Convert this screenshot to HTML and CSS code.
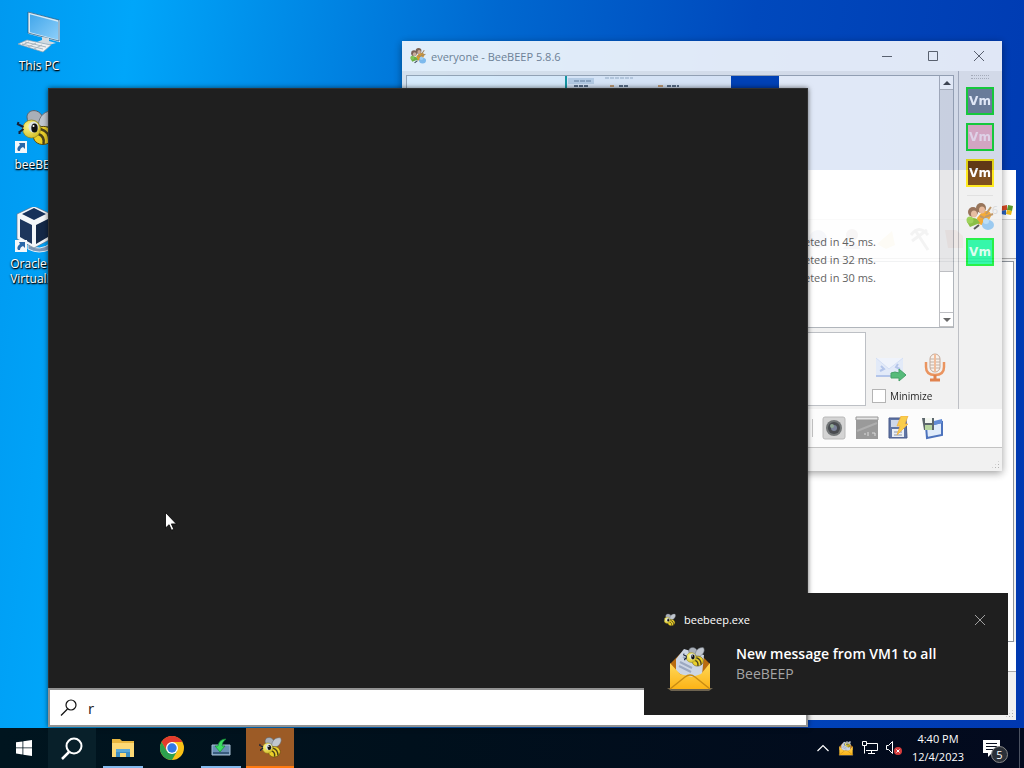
FILE: index.html
```html
<!DOCTYPE html>
<html lang="en">
<head>
    <meta charset="utf-8">
    <title>Desktop</title>
    <link rel="stylesheet" href="styles.css">
</head>
<body>
    <svg class="defs" width="0" height="0" aria-hidden="true">
        <defs>
            <linearGradient id="screenFill" x1="0" y1="0" x2="1" y2="1">
                <stop offset="0" stop-color="#3fa5ea"/>
                <stop offset="1" stop-color="#8fd0fa"/>
            </linearGradient>
            <linearGradient id="mailFill" x1="0" y1="0" x2="0" y2="1">
                <stop offset="0" stop-color="#ffd95a"/>
                <stop offset="1" stop-color="#fcb316"/>
            </linearGradient>
            <radialGradient id="beeFace" cx=".35" cy=".35" r=".8">
                <stop offset="0" stop-color="#fdf78a"/>
                <stop offset="1" stop-color="#cdb51b"/>
            </radialGradient>
        </defs>
        <symbol id="bee" viewBox="0 0 40 40">
            <path d="M13 16C7 7 13 1 20 3c6 2 8 9 6 15z" fill="#a9afb8" stroke="#59616b"/>
            <path d="M22 17c0-9 7-15 15-14 4 4 0 14-9 17z" fill="#c0c6ce" stroke="#6d747d"/>
            <path d="M21 20c8-4 15 0 16 7 0 7-8 11-14 9-6-2-9-8-2-16z" fill="#ebd02b" stroke="#5b4a0a"/>
            <path d="M24 21c7 2 9 6 9 13M22 26c5 2 6 5 5 10" fill="none" stroke="#4a421b" stroke-width="2.500"/>
            <circle cx="15" cy="21" r="9" fill="url(#beeFace)" stroke="#8b831b" stroke-width=".7"/>
            <ellipse cx="17" cy="19" rx="5" ry="5.500" fill="#dbe4e6"/>
            <ellipse cx="18" cy="20" rx="3.200" ry="4.500" fill="#111"/>
            <circle cx="17" cy="18" r="1" fill="#fff"/>
            <path d="M7 19l-6-3M7 21l-4 3M2 14l-1 3M3 23v3" stroke="#16213a" stroke-width="2" fill="none"/>
        </symbol>
        <symbol id="envelope" viewBox="0 0 48 48">
            <path d="M1 44h46l-4 3H5z" fill="#6d6350"/>
            <path d="M4 20L16 8h16l12 12v10H4z" fill="#b86c10"/>
            <path d="M10 15l8-10 20 6-2 20-12 6-14-10z" fill="#cdd6e4"/>
            <path d="M14 18l12 6M13 22l12 6M17 13l9 5" stroke="#9ba8c0" stroke-width="2"/>
            <use href="#bee" x="17" y="2" width="22" height="22"/>
            <path d="M4 19l10 11 12 3 9-3 9-11v26H4z" fill="url(#mailFill)"/>
            <path d="M4 45l15-12q5-4 10 0l15 12" fill="none" stroke="#c98c13" stroke-width="1.500"/>
        </symbol>
        <symbol id="people" viewBox="0 0 28 28">
            <path d="M11 15l5-6q9-3 9 4l-5 10-8-2z" fill="#f3a01c"/>
            <circle cx="7" cy="9" r="5" fill="#8b6046"/>
            <ellipse cx="8" cy="11" rx="3" ry="3.500" fill="#e4b595"/>
            <circle cx="15" cy="5" r="5" fill="#8a6244"/>
            <ellipse cx="16" cy="7" rx="3" ry="3.500" fill="#e5b08c"/>
            <path d="M20 11l5-7M19 14l8-3M14 13l6 3" stroke="#b98b56" stroke-width="2"/>
            <path d="M1 19q4-6 10-3l3 4-10 4z" fill="#7cb82f"/>
            <circle cx="4" cy="17" r="3.500" fill="#93cf47"/>
            <ellipse cx="22" cy="22" rx="6" ry="5" fill="#8fc4ef"/>
            <circle cx="20" cy="18" r="3" fill="#b3daf7"/>
            <path d="M8 26l5-4" stroke="#444" stroke-width="2"/>
        </symbol>
        <symbol id="shortcut" viewBox="0 0 12 12">
            <path d="M0 0h12v12H0z" fill="#f4f7fa"/>
            <path d="M4 2h6v6L8 6Q5 7 5 10H3Q1 7 5 4z" fill="#2a67a8"/>
        </symbol>
    </svg>

    <main class="desktop">
        <div class="shortcuts">
            <a class="shortcut" href="#">
                <svg width="48" height="46" viewBox="0 0 48 46">
                    <path d="M14 4l30 8v20l-30-8z" fill="url(#screenFill)" stroke="#d9ecf7" stroke-width="2"/>
                    <path d="M13 3l31 8v21l-31-8z" fill="none" stroke="#1a527b" stroke-width=".7"/>
                    <path d="M27 28l7 1v3l7 2-7 2-12-3 5-2z" fill="#d1dbe2"/>
                    <path d="M3 35l9-4 24 5-8 7z" fill="#eef1f3" stroke="#8fa2af" stroke-width=".7"/>
                    <path d="M7 35l21 5M10 33l21 5M14 33l-7 3M21 34l-8 4M27 36l-8 4" stroke="#a9b6bf"/>
                </svg>
                <span>This PC</span>
            </a>
            <a class="shortcut" href="#">
                <svg width="48" height="46" viewBox="0 0 48 46">
                    <use href="#bee" x="0" y="0" width="43" height="40"/>
                    <use href="#shortcut" x="0" y="33" width="12" height="12"/>
                </svg>
                <span>beeBEEP</span>
            </a>
            <a class="shortcut" href="#">
                <svg width="48" height="46" viewBox="0 0 48 46">
                    <path d="M13 38q12 7 23-2v6q-12 6-23 0z" fill="#7b96b6" stroke="#e4edf5"/>
                    <path d="M19 -1l17 8v25l-17 9L2 32V7z" fill="#f3f6f9" stroke="#58718d" stroke-width=".7"/>
                    <path d="M19 1l12 6-12 6-12-6z" fill="#17315a"/>
                    <path d="M5 12l12 6v19L5 30z" fill="#1d355c"/>
                    <path d="M21 18l12-6v18l-12 7z" fill="#142847"/>
                    <use href="#shortcut" x="0" y="33" width="12" height="12"/>
                </svg>
                <span>Oracle VM VirtualBox</span>
            </a>
        </div>

        <section class="window window-back">
            <div class="back-title"></div>
            <div class="back-menu">
                <span>6</span>
                <svg width="12" height="12" viewBox="0 0 12 12">
                    <path d="M1 2l5-1v5L0 7z" fill="#d84a24"/>
                    <path d="M7 1l5 1-1 5-5-1z" fill="#5b9b2c"/>
                    <path d="M0 7l5-1v5l-5-1z" fill="#2b62bd"/>
                    <path d="M6 6l5 1-1 4-5-1z" fill="#edbc19"/>
                </svg>
            </div>
            <div class="back-tools">
                <svg width="24" height="24" viewBox="0 0 24 24"><circle cx="12" cy="12" r="9" fill="#b1bdd5"/></svg>
                <svg width="24" height="24" viewBox="0 0 24 24"><circle cx="12" cy="8" r="6" fill="#baa"/><path d="M3 22q9-14 18 0z" fill="#bbc"/></svg>
                <svg width="24" height="24" viewBox="0 0 24 24"><path d="M3 17L18 4l3 14-9 4z" fill="#eadcab"/></svg>
                <svg width="24" height="24" viewBox="0 0 24 24"><path d="M3 8q8-11 17 0M7 3l13 20M19 3L4 14" fill="none" stroke="#999" stroke-width="3"/></svg>
                <svg width="24" height="24" viewBox="0 0 24 24"><path d="M3 3h11l7 6v12H6z" fill="#dcab98"/></svg>
            </div>
            <div class="back-body"></div>
            <div class="back-gap"></div>
            <div class="back-status"><div class="sizegrip"></div></div>
        </section>

        <section class="window window-chat">
            <header class="chat-title">
                <svg width="16" height="16"><use href="#people"/></svg>
                <h1>everyone - BeeBEEP 5.8.6</h1>
                <button type="button" aria-label="Minimize window"><svg width="12" height="12"><path d="M1 6.500h10"/></svg></button>
                <button type="button" aria-label="Maximize window"><svg width="12" height="12"><path d="M1.500 1.500h9v9h-9z"/></svg></button>
                <button type="button" aria-label="Close window"><svg width="12" height="12"><path d="M1 1l10 10M11 1L1 11"/></svg></button>
            </header>
            <div class="chat-client">
                <div class="chat-main">
                    <div class="chat-log">
                        <div class="log-text">
                            <div class="preview">
                                <div class="preview-left"></div>
                                <div class="preview-mid">
                                    <svg width="160" height="12" viewBox="0 0 160 12">
                                        <path d="M1 2h26v6H1z" fill="#ccdae8"/>
                                        <path d="M7 5h18" stroke="#6f7f93" stroke-dasharray="5 1"/>
                                        <path d="M38 2h28" stroke="#a4b3c3" stroke-dasharray="4 1"/>
                                        <path d="M7 10h14M52 10h9M100 10h12" stroke="#65707f" stroke-width="2" stroke-dasharray="4 1"/>
                                        <path d="M43 10h4M91 10h5" stroke="#d6a36b" stroke-width="2"/>
                                    </svg>
                                </div>
                                <div class="preview-right"></div>
                            </div>
                            <ul class="transfers">
                                <li>completed in 45 ms.</li>
                                <li>completed in 32 ms.</li>
                                <li>completed in 30 ms.</li>
                            </ul>
                        </div>
                        <div class="scrollbar">
                            <span class="scroll-arrow"><svg width="8" height="4"><path d="M0 4l4-4 4 4z" fill="#444"/></svg></span>
                            <span class="scroll-thumb"></span>
                            <span class="scroll-arrow"><svg width="8" height="4"><path d="M0 0l4 4 4-4z" fill="#555"/></svg></span>
                        </div>
                    </div>
                    <form class="composer">
                        <textarea aria-label="Message"></textarea>
                        <div class="composer-side">
                            <div class="composer-buttons">
                                <button type="button" aria-label="Send">
                                    <svg width="32" height="32" viewBox="0 0 32 32">
                                        <path d="M1 6h27v18H1z" fill="#dfe7f8"/>
                                        <path d="M1 6l13 11L28 6" fill="#edf2fb" stroke="#cfdbf3"/>
                                        <path d="M1 24h15M6 14l3 3-4 2M23 12l-2 3 4 2" fill="none" stroke="#a9bde8" stroke-width="2"/>
                                        <path d="M16 21q4-2 8 0v-4l7 6-7 6v-3h-8z" fill="#3fb268" stroke="#2d9554"/>
                                    </svg>
                                </button>
                                <button type="button" aria-label="Record">
                                    <svg width="32" height="32" viewBox="0 0 32 32">
                                        <rect x="11" y="2" width="10" height="18" rx="5" fill="#f7efe9" stroke="#bd9c88"/>
                                        <path d="M11 7h10M11 10h10M11 13h10M11 16h10" stroke="#b9a598"/>
                                        <path d="M16 2v18" stroke="#f0b48e" stroke-width="2"/>
                                        <path d="M7 10v5q0 8 9 8t9-8v-5" fill="none" stroke="#e8864a" stroke-width="2.500"/>
                                        <path d="M16 23v5M11 28h10" stroke="#dc7136" stroke-width="3"/>
                                    </svg>
                                </button>
                            </div>
                            <label class="minimize"><input type="checkbox">Minimize</label>
                        </div>
                    </form>
                </div>
                <aside class="users">
                    <div class="grip"></div>
                    <button type="button" class="user user-slate">Vm</button>
                    <button type="button" class="user user-pink">Vm</button>
                    <button type="button" class="user user-brown">Vm</button>
                    <div class="divider"></div>
                    <button type="button" class="group" aria-label="Everyone"><svg width="28" height="28"><use href="#people"/></svg></button>
                    <button type="button" class="user user-mint">Vm</button>
                </aside>
            </div>
            <div class="chat-tools">
                <div class="tools-divider"></div>
                <button type="button" aria-label="Camera">
                    <svg width="24" height="24" viewBox="0 0 24 24">
                        <rect x="1" y="1" width="22" height="22" rx="2" fill="#cfcfcf" stroke="#b0b0b0"/>
                        <circle cx="12" cy="12" r="8" fill="#5f6365"/>
                        <circle cx="12" cy="12" r="6" fill="#303338"/>
                        <circle cx="12" cy="12" r="3" fill="#68718b"/>
                        <circle cx="10" cy="10" r="2" fill="#809b87"/>
                    </svg>
                </button>
                <button type="button" aria-label="Screenshot">
                    <svg width="24" height="24" viewBox="0 0 24 24">
                        <path d="M1 1h22v22H1z" fill="#8c8c8c"/>
                        <path d="M1 1h22v3H1z" fill="#e2e2e2" stroke="#8a8a8a"/>
                        <path d="M2 15L22 7" stroke="#a4a4a4" stroke-width="2"/>
                        <path d="M9 18h2M13 16v4M17 17h3v3" fill="none" stroke="#d5d5d5"/>
                    </svg>
                </button>
                <button type="button" aria-label="Save draft">
                    <svg width="24" height="24" viewBox="0 0 24 24">
                        <path d="M1 2h17l1 20H1z" fill="#4a6399" stroke="#31457a"/>
                        <path d="M3 4h12v7H3z" fill="#c8d3e6"/>
                        <path d="M4 13h12v8H4z" fill="#e9edf4"/>
                        <path d="M6 16h8M6 19h8" stroke="#7f8898"/>
                        <path d="M13 0h7l-3 8h3L9 19l3-9H9z" fill="#f9c633" stroke="#efa425" stroke-width=".7"/>
                    </svg>
                </button>
                <button type="button" aria-label="Save chat">
                    <svg width="24" height="24" viewBox="0 0 24 24">
                        <path d="M5 10l16-4v13L6 22z" fill="#dceafb" stroke="#3560b4" stroke-width="2"/>
                        <path d="M13 5l8-2v4l-8 2z" fill="#4d7cd0"/>
                        <path d="M1 2h12v12H3z" fill="#475258"/>
                        <path d="M4 2h7v5H4z" fill="#f1f5ee"/>
                        <path d="M4 9h7v5H4z" fill="#afd193"/>
                    </svg>
                </button>
            </div>
            <footer class="chat-status"><div class="sizegrip"></div></footer>
        </section>

        <section class="search-panel">
            <div class="search-results"></div>
            <label class="search-box">
                <svg width="18" height="18" viewBox="0 0 18 18"><circle cx="11" cy="6" r="5"/><path d="M7.500 10L1 16.500"/></svg>
                <input type="text" value="r" aria-label="Search">
            </label>
        </section>

        <section class="toast">
            <div class="toast-head">
                <svg width="14" height="14"><use href="#bee"/></svg>
                <span>beebeep.exe</span>
                <button type="button" aria-label="Dismiss"><svg width="12" height="12"><path d="M1 1l10 10M11 1L1 11"/></svg></button>
            </div>
            <div class="toast-body">
                <svg width="48" height="48"><use href="#envelope"/></svg>
                <div>
                    <h2>New message from VM1 to all</h2>
                    <p>BeeBEEP</p>
                </div>
            </div>
        </section>

        <svg class="pointer" width="12" height="19" viewBox="0 0 12 19"><path d="M.5.5v15.500l3.600-3.300 2.400 5.600 2.300-1-2.400-5.400h5z" fill="#fff" stroke="#000" stroke-width=".8"/></svg>
    </main>

    <nav class="taskbar">
        <button type="button" class="task" aria-label="Start">
            <svg width="16" height="16" viewBox="0 0 16 16"><path d="M0 2.300l6.500-.9v6.100H0zM7.300 1.300L16 0v7.500H7.300zM0 8.300h6.500v6.200L0 13.600zM7.300 8.300H16V16l-8.700-1.300z" fill="#fff"/></svg>
        </button>
        <button type="button" class="task task-search" aria-label="Search">
            <svg width="24" height="24" viewBox="0 0 24 24"><circle cx="14" cy="10" r="7.500" fill="none" stroke="#fff" stroke-width="2"/><path d="M9 16l-7 7" stroke="#fff" stroke-width="2.500"/></svg>
        </button>
        <div class="apps">
            <button type="button" class="task running" aria-label="File Explorer">
                <svg width="24" height="20" viewBox="0 0 24 20">
                    <path d="M1 1h8l2 2h12v16H1z" fill="#e8b63f"/>
                    <path d="M1 5h22v14H1z" fill="#fcd975"/>
                    <path d="M5 11h14v8h-4v-4H9v4H5z" fill="#3f8fc4"/>
                    <path d="M5 11h14v3H5z" fill="#5ba9d9"/>
                </svg>
            </button>
            <button type="button" class="task" aria-label="Chrome">
                <svg width="24" height="24" viewBox="0 0 24 24">
                    <circle cx="12" cy="12" r="12" fill="#fbc116"/>
                    <path d="M1.600 6A12 12 0 0 1 22.400 6H12L6.800 15z" fill="#e33b2e"/>
                    <path d="M1.600 6A12 12 0 0 0 12 24l5.200-9-10.400 0z" fill="#2da04e"/>
                    <circle cx="12" cy="12" r="6" fill="#fff"/>
                    <circle cx="12" cy="12" r="4.700" fill="#3279e5"/>
                </svg>
            </button>
            <button type="button" class="task running" aria-label="Shared folder">
                <svg width="20" height="20" viewBox="0 0 20 20">
                    <path d="M1 7h18v10H1z" fill="#6b91b6" stroke="#a7bfd3"/>
                    <path d="M2 14h16v2H2z" fill="#395d7e"/>
                    <path d="M15 1Q8 1 7 8H4l5 6 5-6h-3q0-4 4-7z" fill="#3bdd62" stroke="#148e35" stroke-width=".7"/>
                </svg>
            </button>
            <button type="button" class="task task-alert" aria-label="BeeBEEP">
                <svg width="23" height="23"><use href="#bee"/></svg>
            </button>
        </div>
        <div class="tray">
            <svg width="14" height="14" viewBox="0 0 14 14"><path d="M1.500 10L7 4.500l5.500 5.500" fill="none" stroke="#fff" stroke-width="1.200"/></svg>
            <svg width="16" height="16"><use href="#envelope"/></svg>
            <svg width="16" height="14" viewBox="0 0 16 14"><path d="M4 2.500h11.500v7H4M9.500 9.500v3M6 12.500h7M.5.5h4v4h-4zM2.500 4.500v8" fill="none" stroke="#fff"/></svg>
            <svg width="16" height="16" viewBox="0 0 16 16">
                <path d="M.5 5.500h2l4-4v12l-4-4h-2z" fill="none" stroke="#fff"/>
                <circle cx="12" cy="11" r="4" fill="#d63c3c"/>
                <path d="M10.500 9.500l3 3M13.500 9.500l-3 3" stroke="#fff"/>
            </svg>
            <time class="clock"><span>4:40 PM</span><span>12/4/2023</span></time>
            <button type="button" class="action-center" aria-label="Notifications">
                <svg width="17" height="17" viewBox="0 0 17 17"><path d="M0 0h17v13H9l-4 4v-4H0z" fill="#fff"/><path d="M3 3.500h11M3 6.500h11M3 9.500h8" stroke="#0a1020"/></svg>
                <span class="badge">5</span>
            </button>
            <div class="show-desktop"></div>
        </div>
    </nav>
</body>
</html>
```
FILE: styles.css
```css
* {
    box-sizing: border-box;
}

body {
    margin: 0;
    height: 100vh;
    display: flex;
    flex-direction: column;
    overflow: hidden;
    font-family: "Open Sans", "Noto Sans", sans-serif;
    font-size: 11px;
}

button {
    border: 0;
    padding: 0;
    background: none;
    font-family: inherit;
    display: flex;
    align-items: center;
    justify-content: center;
}

svg {
    display: block;
    flex: none;
}

.defs {
    position: absolute;
}

/* desktop */
.desktop {
    position: relative;
    flex: 1;
    background: linear-gradient(97deg, #0099f0 0%, #00a6fa 12%, #008fea 24%, #0068d0 45%, #0049bd 68%, #0038b0 100%);
}

.shortcuts {
    width: 76px;
    padding-top: 9px;
    display: flex;
    flex-direction: column;
}

.shortcut {
    height: 99px;
    padding-left: 2px;
    display: flex;
    flex-direction: column;
    align-items: center;
    color: #fff;
    font-size: 12px;
    line-height: 15px;
    text-align: center;
    text-decoration: none;
    text-shadow: 0 1px 2px #000, 1px 1px 1px #000;
}

.shortcut svg {
    margin-bottom: 3px;
}

/* windows */
.window {
    position: absolute;
    display: flex;
    flex-direction: column;
}

.window-back {
    left: 420px;
    top: 170px;
    width: 596px;
    height: 550px;
    background: #f0f0f0;
}

.back-title {
    height: 30px;
    background: #fff;
}

.back-menu {
    height: 20px;
    padding: 0 3px;
    display: flex;
    align-items: center;
    justify-content: flex-end;
    gap: 3px;
    background: #fdfdfd;
    border-bottom: 1px solid #d0d0d0;
    color: #333;
}

.back-tools {
    height: 39px;
    padding-right: 50px;
    display: flex;
    align-items: center;
    justify-content: flex-end;
    gap: 10px;
    background: #f5f5f5;
    border-bottom: 1px solid #aaa;
}

.back-body {
    flex: 1;
    margin: 2px 2px 0;
    background: #fff;
    border: 1px solid #8e949c;
}

.back-gap {
    height: 30px;
    background: #fff;
    border-bottom: 1px solid #aaa;
}

.back-status {
    height: 48px;
    padding: 2px;
    display: flex;
    align-items: flex-end;
    justify-content: flex-end;
}

.window-chat {
    left: 402px;
    top: 41px;
    width: 600px;
    height: 430px;
    background: #f0f0f0;
    opacity: .88;
    box-shadow: 0 2px 8px rgba(0, 0, 0, .45);
}

.chat-title {
    height: 30px;
    padding: 0 0 0 8px;
    display: flex;
    align-items: center;
    background: #fff;
}

.chat-title h1 {
    flex: 1;
    margin: 0 0 0 5px;
    font-size: 11px;
    font-weight: 400;
    color: #7c858f;
}

.chat-title button {
    width: 46px;
    height: 28px;
}

.chat-title button svg {
    fill: none;
    stroke: #666;
}

.chat-client {
    flex: 1;
    display: flex;
}

.chat-main {
    flex: 1;
    padding: 4px 4px 3px;
    display: flex;
    flex-direction: column;
    gap: 4px;
    border-right: 1px solid #b5b8bd;
}

.chat-log {
    flex: 1;
    display: flex;
    background: #fff;
    border: 1px solid #a6abb2;
}

.log-text {
    flex: 1;
}

.preview {
    height: 157px;
    display: flex;
}

.preview div {
    height: 40px;
}

.preview-left {
    width: 160px;
    background: #f3fbff;
    border-right: 2px solid #179c9c;
}

.preview-mid {
    width: 164px;
    background: #f2f6fc;
}

.preview-right {
    width: 48px;
    background: #0040b4;
}

.transfers {
    margin: 0;
    padding: 0 63px 0 0;
    list-style: none;
    text-align: right;
    line-height: 18px;
    color: #4d4d4d;
}

.scrollbar {
    width: 14px;
    display: flex;
    flex-direction: column;
    background: #e4e4e6;
    border-left: 1px solid #b4b6ba;
}

.scroll-arrow {
    height: 14px;
    display: flex;
    align-items: center;
    justify-content: center;
    background: #fff;
    border-bottom: 1px solid #bbb;
}

.scroll-thumb {
    height: 42px;
    margin-top: auto;
    background: #fff;
    border-top: 1px solid #b4b6ba;
    border-bottom: 1px solid #b4b6ba;
}

.composer {
    height: 74px;
    display: flex;
}

.composer textarea {
    flex: 1;
    border: 1px solid #b4b8be;
    background: #fff;
    resize: none;
}

.composer-side {
    width: 88px;
    padding: 20px 0 0 6px;
    display: flex;
    flex-direction: column;
    gap: 4px;
}

.composer-buttons {
    padding-left: 3px;
    display: flex;
    gap: 12px;
}

.minimize {
    display: flex;
    align-items: center;
    gap: 4px;
    font-size: 10px;
    line-height: 16px;
    color: #000;
}

.minimize input {
    appearance: none;
    width: 14px;
    height: 14px;
    margin: 0;
    background: #fff;
    border: 1px solid #aaa;
}

.users {
    width: 43px;
    padding: 4px 1px 0 0;
    display: flex;
    flex-direction: column;
    align-items: center;
    gap: 8px;
}

.grip {
    width: 18px;
    height: 4px;
    border-top: 1px dotted #bbb;
    border-bottom: 1px dotted #bbb;
}

.user {
    width: 28px;
    height: 28px;
    border: 2px solid #18dc2c;
    color: #fff;
    font-family: "DejaVu Sans", sans-serif;
    font-size: 12px;
    font-weight: 700;
}

.user-slate {
    background: #788496;
}

.user-pink {
    background: #f0b4c4;
    color: #fde6ee;
}

.user-brown {
    background: #6e3800;
    border-color: #ffe600;
}

.user-mint {
    background: #1cf8a0;
    border-color: #0cf030;
    color: #d9fff0;
}

.divider {
    width: 26px;
    height: 1px;
    background: #ddd;
}

.group {
    height: 26px;
}

.chat-tools {
    height: 38px;
    padding: 0 57px;
    display: flex;
    align-items: center;
    justify-content: flex-end;
    gap: 9px;
    background: #fcfcfc;
}

.tools-divider {
    width: 4px;
    height: 18px;
    border-right: 1px solid #bbb;
}

.chat-status {
    height: 24px;
    padding: 2px;
    display: flex;
    align-items: flex-end;
    justify-content: flex-end;
    border-top: 1px solid #bbb;
}

.sizegrip {
    width: 9px;
    height: 9px;
    background: radial-gradient(#aaa 1px, transparent 1px) 0 0 / 3px 3px;
    clip-path: polygon(100% 0, 100% 100%, 0 100%);
}

/* search */
.search-panel {
    position: absolute;
    left: 48px;
    bottom: 1px;
    width: 760px;
    height: 639px;
    display: flex;
    flex-direction: column;
    background: #1f1f1f;
    box-shadow: 0 0 5px rgba(0, 0, 0, .6);
}

.search-results {
    flex: 1;
    border: 1px solid #303030;
    border-bottom: 0;
}

.search-box {
    height: 39px;
    padding-left: 10px;
    display: flex;
    align-items: center;
    gap: 10px;
    background: #fff;
    border: 2px solid #929292;
}

.search-box svg {
    fill: none;
    stroke: #111;
    stroke-width: 1.2;
}

.search-box input {
    flex: 1;
    border: 0;
    padding: 0;
    outline: 0;
    font: 15px "Open Sans", sans-serif;
    color: #222;
}

/* notification */
.toast {
    position: absolute;
    right: 16px;
    bottom: 13px;
    width: 364px;
    height: 122px;
    padding: 18px 22px 0 18px;
    background: #1f1f1f;
    color: #fff;
}

.toast-head {
    display: flex;
    align-items: center;
    gap: 8px;
    line-height: 17px;
}

.toast-head button {
    margin-left: auto;
}

.toast-head button svg {
    fill: none;
    stroke: #a0a0a0;
}

.toast-body {
    padding: 16px 0 0 4px;
    display: flex;
    gap: 22px;
}

.toast-body h2 {
    margin: 0;
    font-size: 14px;
    font-weight: 600;
    line-height: 20px;
}

.toast-body p {
    margin: 0;
    font-size: 14px;
    line-height: 20px;
    color: #a5a5a5;
}

.pointer {
    position: absolute;
    left: 165px;
    top: 512px;
}

/* taskbar */
.taskbar {
    height: 40px;
    display: flex;
    background: linear-gradient(90deg, #00151f, #00101c 40%, #030a1e);
    color: #fff;
}

.task {
    position: relative;
    width: 48px;
    height: 40px;
}

.task-search {
    background: #08202a;
}

.apps {
    margin-left: 3px;
    display: flex;
    gap: 1px;
}

.running::after {
    content: "";
    position: absolute;
    left: 4px;
    right: 4px;
    bottom: 0;
    height: 2px;
    background: #83b9ed;
}

.task-alert {
    background: #9c5b26;
    border-bottom: 2px solid #ff7a10;
}

.tray {
    margin-left: auto;
    display: flex;
    align-items: center;
    gap: 8px;
}

.clock {
    width: 56px;
    display: flex;
    flex-direction: column;
    align-items: center;
    line-height: 18px;
}

.action-center {
    position: relative;
    width: 34px;
    height: 40px;
    margin-right: 3px;
}

.badge {
    position: absolute;
    right: 0;
    bottom: 5px;
    width: 17px;
    height: 17px;
    border: 1px solid #888;
    border-radius: 50%;
    background: #2b3038;
    color: #fff;
    font-size: 11px;
    line-height: 15px;
    text-align: center;
}

.show-desktop {
    width: 5px;
    height: 40px;
    border-left: 1px solid #4b5261;
}
```
